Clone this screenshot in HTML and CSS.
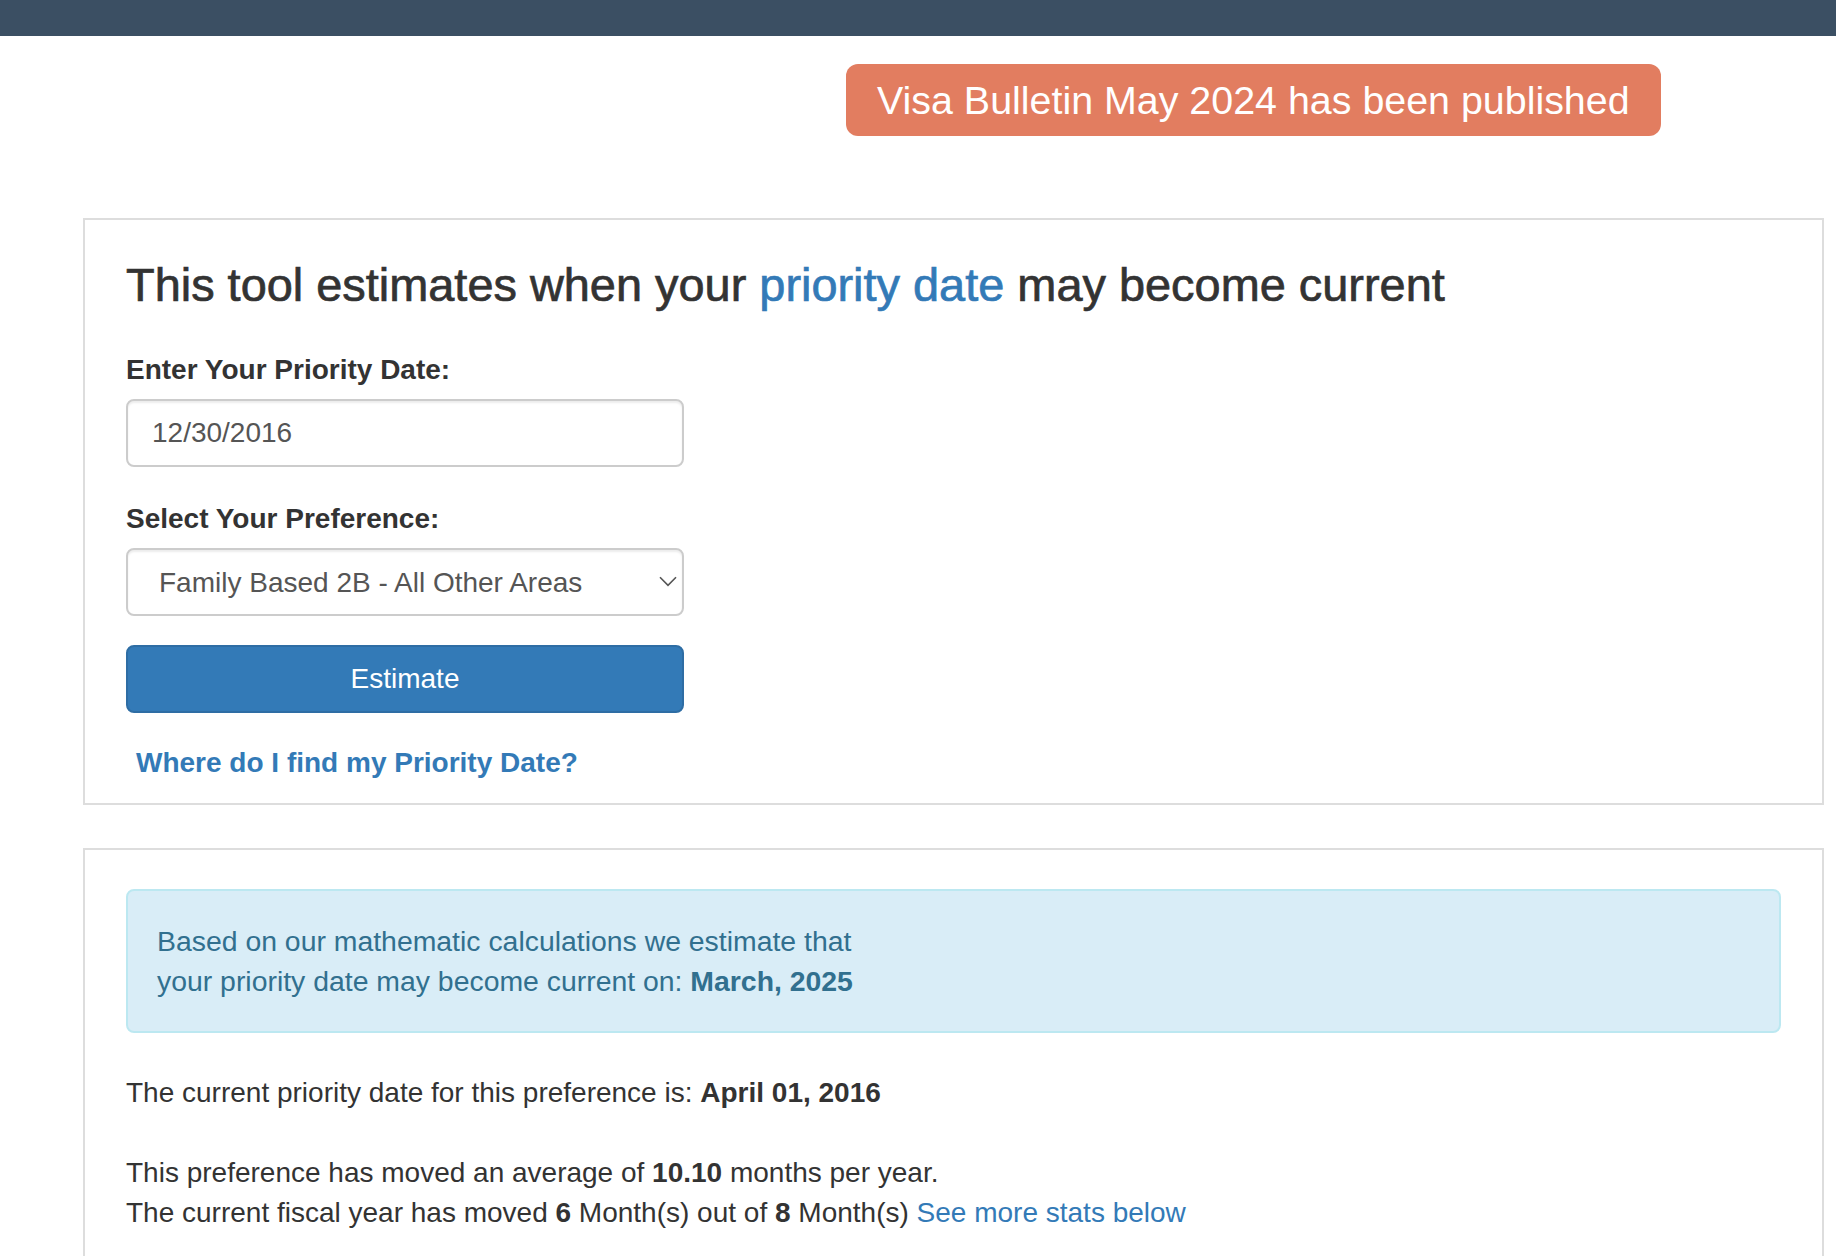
FILE: index.html
```html
<!DOCTYPE html>
<html lang="en">
<head>
<meta charset="utf-8">
<title>Priority Date Estimator</title>
<link rel="stylesheet" href="styles.css">
</head>
<body>
<div class="topbar"></div>
<div class="notice-row">
  <div class="notice">Visa Bulletin May 2024 has been published</div>
</div>

<div class="card card-form">
  <h3 class="title">This tool estimates when your <span class="accent">priority date</span> may become current</h3>
  <div class="form-group">
    <label class="field-label" for="pd">Enter Your Priority Date:</label>
    <input class="form-control" id="pd" type="text" value="12/30/2016">
  </div>
  <div class="form-group">
    <label class="field-label" for="pref">Select Your Preference:</label>
    <div class="select-wrap">
      <select class="form-control select" id="pref">
        <option>Family Based 2B - All Other Areas</option>
      </select>
      <svg class="chevron" width="18" height="11" viewBox="0 0 18 11"><path d="M1 1.2 L9 9.4 L17 1.2" fill="none" stroke="#555" stroke-width="1.6"/></svg>
    </div>
  </div>
  <button class="btn-estimate" type="button">Estimate</button>
  <a class="help-link" href="#">Where do I find my Priority Date?</a>
</div>

<div class="card card-results">
  <div class="alert">Based on our mathematic calculations we estimate that<br>your priority date may become current on: <b>March, 2025</b></div>
  <p class="line">The current priority date for this preference is: <b>April 01, 2016</b></p>
  <p class="line">This preference has moved an average of <b>10.10</b> months per year.<br>The current fiscal year has moved <b>6</b> Month(s) out of <b>8</b> Month(s) <a class="more" href="#">See more stats below</a></p>
</div>
</body>
</html>
```
FILE: styles.css
```css
* { box-sizing: border-box; }

html, body {
  margin: 0;
  padding: 0;
  background: #ffffff;
  font-family: "Liberation Sans", Arial, Helvetica, sans-serif;
  font-size: 28px;
  line-height: 40px;
  color: #333333;
}

.topbar {
  height: 36px;
  background: #3b4f63;
}

.notice-row {
  display: flex;
  padding-left: 846px;
  margin-top: 28px;
}

.notice {
  height: 72px;
  line-height: 73px;
  padding: 0 31px;
  background: #e27d60;
  color: #ffffff;
  font-size: 39.4px;
  border-radius: 12px;
  white-space: nowrap;
}

.card {
  margin-left: 83px;
  width: 1741px;
  border: 2px solid #dddddd;
  padding: 0 41px;
}

.card-form {
  margin-top: 82px;
  padding-top: 39px;
  padding-bottom: 20px;
}

.title {
  margin: 0 0 36px 0;
  font-size: 46.9px;
  line-height: 53px;
  font-weight: normal;
  -webkit-text-stroke: 0.7px #333333;
  color: #333333;
}

.accent {
  color: #337ab7;
  -webkit-text-stroke: 0.7px #337ab7;
}

.form-group { margin-bottom: 30px; }

.field-label {
  display: block;
  font-weight: bold;
  padding-top: 2px;
  margin-bottom: 9px;
}

.form-control {
  display: block;
  width: 558px;
  height: 68px;
  border: 2px solid #cccccc;
  border-radius: 8px;
  padding: 0 24px;
  font-family: inherit;
  font-size: 28px;
  color: #555555;
  background: #ffffff;
  box-shadow: inset 0 2px 2px rgba(0,0,0,0.075);
}

.select-wrap {
  position: relative;
  width: 558px;
}

.select {
  -webkit-appearance: none;
  appearance: none;
  padding-left: 31px;
}

.chevron {
  position: absolute;
  right: 7px;
  top: 28px;
}

.btn-estimate {
  display: block;
  width: 558px;
  height: 68px;
  margin-top: -1px;
  background: #337ab7;
  border: 2px solid #2e6da4;
  border-radius: 8px;
  color: #ffffff;
  font-family: inherit;
  font-size: 28px;
}

.help-link {
  display: block;
  margin: 30px 0 0 10px;
  font-weight: bold;
  color: #337ab7;
  text-decoration: none;
}

.card-results {
  margin-top: 43px;
  padding-top: 39px;
  min-height: 420px;
}

.alert {
  background: #d9edf7;
  border: 2px solid #bce8f1;
  border-radius: 8px;
  color: #31708f;
  padding: 30px 30px 30px 29px;
  margin-bottom: 40px;
  font-size: 28.4px;
}

.line { margin: 0 0 40px 0; }

.more {
  color: #337ab7;
  text-decoration: none;
}
```
